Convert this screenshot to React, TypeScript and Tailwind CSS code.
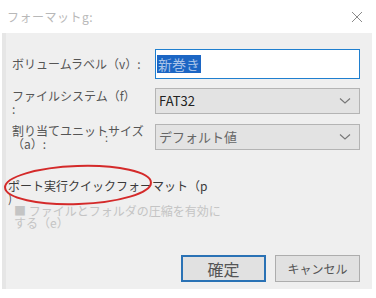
import React from "react";

const jp = { fontFamily: '"Noto Sans CJK JP", "Noto Sans", sans-serif' };

const Chevron = () => (
  <svg width="12" height="8" viewBox="0 0 12 8" className="text-[#777]">
    <path d="M1 1.5 L6 6 L11 1.5" fill="none" stroke="currentColor" strokeWidth="1.1" />
  </svg>
);

const SelectBox = ({ value, dark }: { value: string; dark?: boolean }) => (
  <div className="flex items-center justify-between w-[205px] h-[26px] bg-[#e3e3e3] border border-[#b4b4b4] pl-[3px] pr-[8px]">
    <span className={dark ? "text-[13px] text-[#222]" : "text-[13px] text-[#666]"}>{value}</span>
    <Chevron />
  </div>
);

export default function App() {
  return (
    <div className="relative w-[376px] h-[298px] bg-white overflow-hidden text-[#555]" style={jp}>
      <div className="flex items-center justify-between h-[33px] pl-[7px] pr-[13px]">
        <span className="text-[12px] text-[#b8b8b8] tracking-[0.5px]">フォーマットg:</span>
        <svg width="12" height="12" viewBox="0 0 12 12">
          <path d="M1 1 L11 11 M11 1 L1 11" stroke="#8a8a8a" strokeWidth="1" />
        </svg>
      </div>

      <div className="ml-[2px] w-[370px] h-[256px] bg-[#efefef] border-l-[4px] border-[#e6e6e6] flex flex-col">
        <div className="flex items-center justify-between pt-[16px] pl-[6px] pr-[12px]">
          <span className="text-[12px]">ボリュームラベル（v）:</span>
          <div className="w-[205px] h-[30px] bg-white border border-[#1f7fcf] flex items-center pl-[1px]">
            <span className="text-[14px] bg-[#1c66c4] text-[#a9c3e8] leading-[18px] px-[1px]">新巻き</span>
          </div>
        </div>

        <div className="flex justify-between pt-[9px] pl-[6px] pr-[12px]">
          <div className="flex flex-col text-[12px] leading-[13px] pt-[1px]">
            <span>ファイルシステム（f）</span>
            <span>:</span>
          </div>
          <SelectBox value="FAT32" dark />
        </div>

        <div className="flex justify-between pt-[9px] pl-[6px] pr-[12px]">
          <div className="relative flex flex-col text-[12px] leading-[13px]">
            <span>割り当てユニットサイズ</span>
            <span>（a）:</span>
            <span className="absolute left-[93px] top-[7px] text-[11px]">:</span>
          </div>
          <SelectBox value="デフォルト値" />
        </div>

        <div className="flex flex-col pt-[30px] pl-[2px] text-[12px] leading-[12px]">
          <span className="text-[#3a3a3a]">ポート実行クイックフォーマット（p</span>
          <span>)</span>
        </div>

        <div className="flex flex-col pt-[1px] pl-[8px] text-[12px] leading-[12px] text-[#c4c4c4]">
          <span>■ ファイルとフォルダの圧縮を有効に</span>
          <span>する（e）</span>
        </div>

        <div className="flex justify-end gap-[9px] mt-auto mb-[7px] pr-[12px]">
          <div className="w-[85px] h-[27px] flex items-center justify-center bg-[#e1e1e1] border-2 border-[#2a72b5] text-[16px] text-[#555]">
            確定
          </div>
          <div className="w-[85px] h-[27px] flex items-center justify-center bg-[#e1e1e1] border border-[#adadad] text-[12px] text-[#555]">
            キャンセル
          </div>
        </div>
      </div>

      <svg className="absolute left-0 top-0 pointer-events-none" width="376" height="298">
        <ellipse cx="78" cy="185" rx="73" ry="19" fill="none" stroke="#d42a2a" strokeWidth="2" transform="rotate(-2 78 185)" />
      </svg>
    </div>
  );
}
